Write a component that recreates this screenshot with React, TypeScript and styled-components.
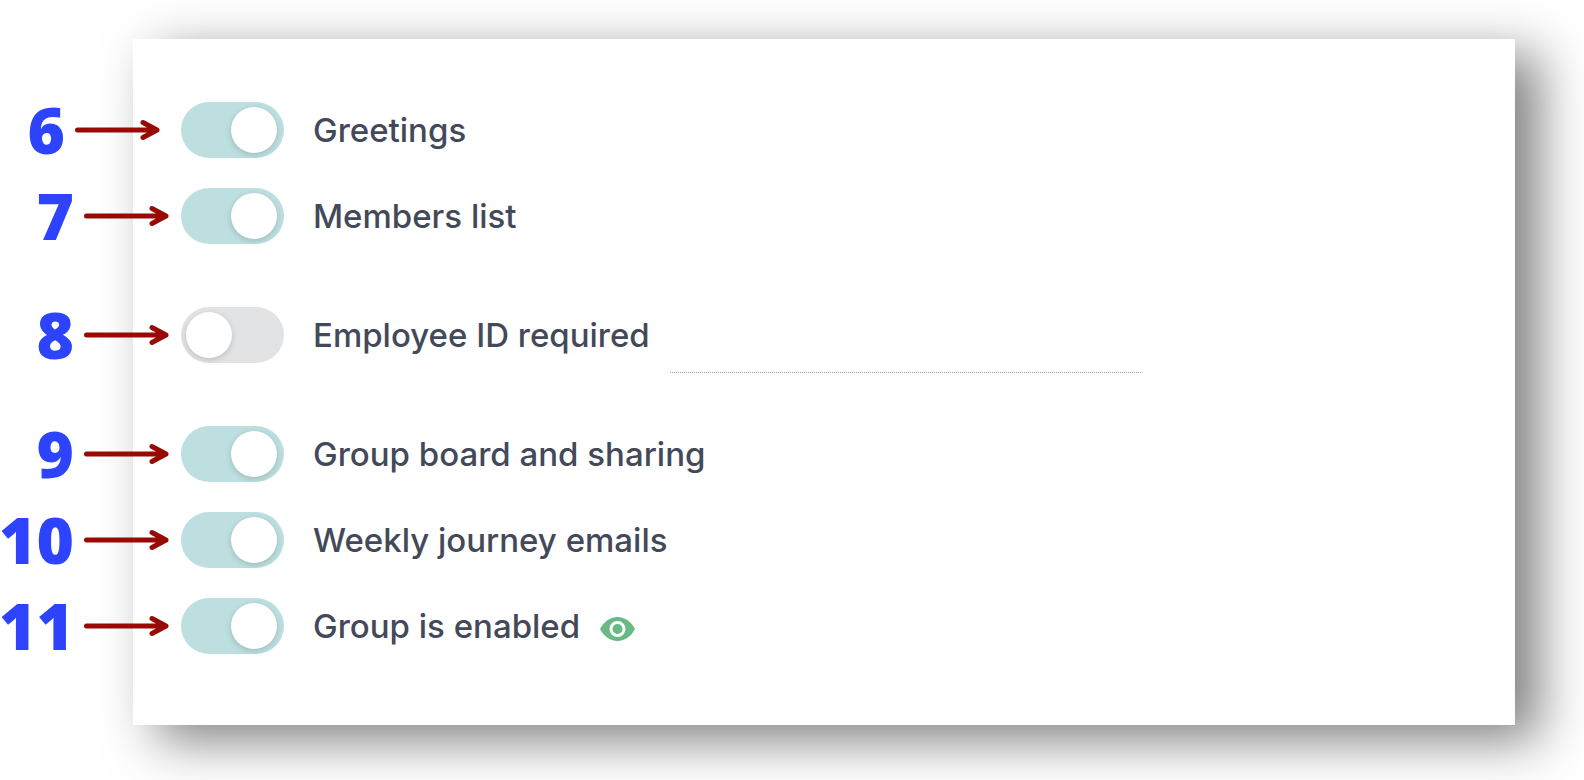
import React from "react";
import styled, { createGlobalStyle } from "styled-components";

const GlobalStyle = createGlobalStyle`
  * { box-sizing: border-box; }
  body { margin: 0; background: #fff; overflow-x: hidden; }
`;

const Page = styled.main`
  padding: 39px 69px 55px 133px;
`;

const Card = styled.section`
  display: flex;
  flex-direction: column;
  gap: 63px;
  padding: 63px 48px 71px 0;
  background: #fff;
  box-shadow: 24px 15px 49px rgba(0, 0, 0, 0.5);
`;

const Group = styled.div`
  display: flex;
  flex-direction: column;
  gap: 30px;
`;

const Row = styled.div`
  display: flex;
  align-items: center;
  height: 56px;
  margin-left: -133px;
`;

const Callout = styled.div<{ $inset: number }>`
  display: flex;
  align-items: center;
  justify-content: flex-end;
  flex: none;
  gap: 10px;
  width: 181px;
  padding-right: ${(p) => p.$inset}px;
`;

const Step = styled.span`
  color: #2d43fd;
  font: 800 64px/56px "Open Sans", sans-serif;
`;

const Switch = styled.input`
  appearance: none;
  flex: none;
  display: flex;
  align-items: center;
  width: 103px;
  height: 56px;
  margin: 0;
  padding: 0 7px 0 5px;
  border-radius: 28px;
  background: #e2e3e5;
  cursor: pointer;

  &::before {
    content: "";
    width: 46px;
    height: 46px;
    border-radius: 50%;
    background: #fff;
    box-shadow: 0 2px 6px rgba(0, 0, 0, 0.16);
  }

  &:checked {
    justify-content: flex-end;
    background: #bddfdf;
  }
`;

const Label = styled.label`
  margin-left: 29px;
  color: #434959;
  font: 500 33px/40px Inter, sans-serif;
  white-space: nowrap;
`;

const DottedInput = styled.input`
  flex: 0 1 471px;
  min-width: 0;
  height: 76px;
  margin-left: 20px;
  padding: 0;
  border: 0;
  border-bottom: 1px dotted #999;
  background: transparent;
  font: 400 33px/40px Inter, sans-serif;
  outline: none;
`;

const Eye = styled.svg`
  flex: none;
  margin: 5px 0 0 20px;
`;

const ArrowIcon = styled.svg`
  flex: none;
`;

const Arrow = () => (
  <ArrowIcon width="85" height="22" viewBox="0 0 85 22" fill="none" stroke="#980b04" strokeWidth="5" strokeLinecap="round" strokeLinejoin="round" aria-hidden="true">
    <path d="M2.5 11H82M68 3.500L82 11L68 18.500" />
  </ArrowIcon>
);

type Setting = { step: number; id: string; text: string; on: boolean; inset?: number; extra?: React.ReactNode };

const groups: Setting[][] = [
  [
    { step: 6, id: "greetings", text: "Greetings", on: true, inset: 21 },
    { step: 7, id: "members", text: "Members list", on: true },
  ],
  [
    {
      step: 8,
      id: "employee",
      text: "Employee ID required",
      on: false,
      extra: <DottedInput type="text" aria-label="Employee ID" />,
    },
  ],
  [
    { step: 9, id: "board", text: "Group board and sharing", on: true },
    { step: 10, id: "emails", text: "Weekly journey emails", on: true },
    {
      step: 11,
      id: "enabled",
      text: "Group is enabled",
      on: true,
      extra: (
        <Eye width="35" height="24" viewBox="0 0 35 24" aria-hidden="true">
          <path d="M0 12C4 4 11 0 17.500 0S31 4 35 12C31 20 24 24 17.500 24S4 20 0 12Z" fill="#69b985" />
          <circle cx="17.500" cy="12" r="6.500" fill="#69b985" stroke="#fff" strokeWidth="3" />
        </Eye>
      ),
    },
  ],
];

export default function App() {
  return (
    <>
      <GlobalStyle />
      <Page>
        <Card>
          {groups.map((group, i) => (
            <Group key={i}>
              {group.map((s) => (
                <Row key={s.id}>
                  <Callout $inset={s.inset ?? 12}>
                    <Step>{s.step}</Step>
                    <Arrow />
                  </Callout>
                  <Switch type="checkbox" id={s.id} defaultChecked={s.on} />
                  <Label htmlFor={s.id}>{s.text}</Label>
                  {s.extra}
                </Row>
              ))}
            </Group>
          ))}
        </Card>
      </Page>
    </>
  );
}
